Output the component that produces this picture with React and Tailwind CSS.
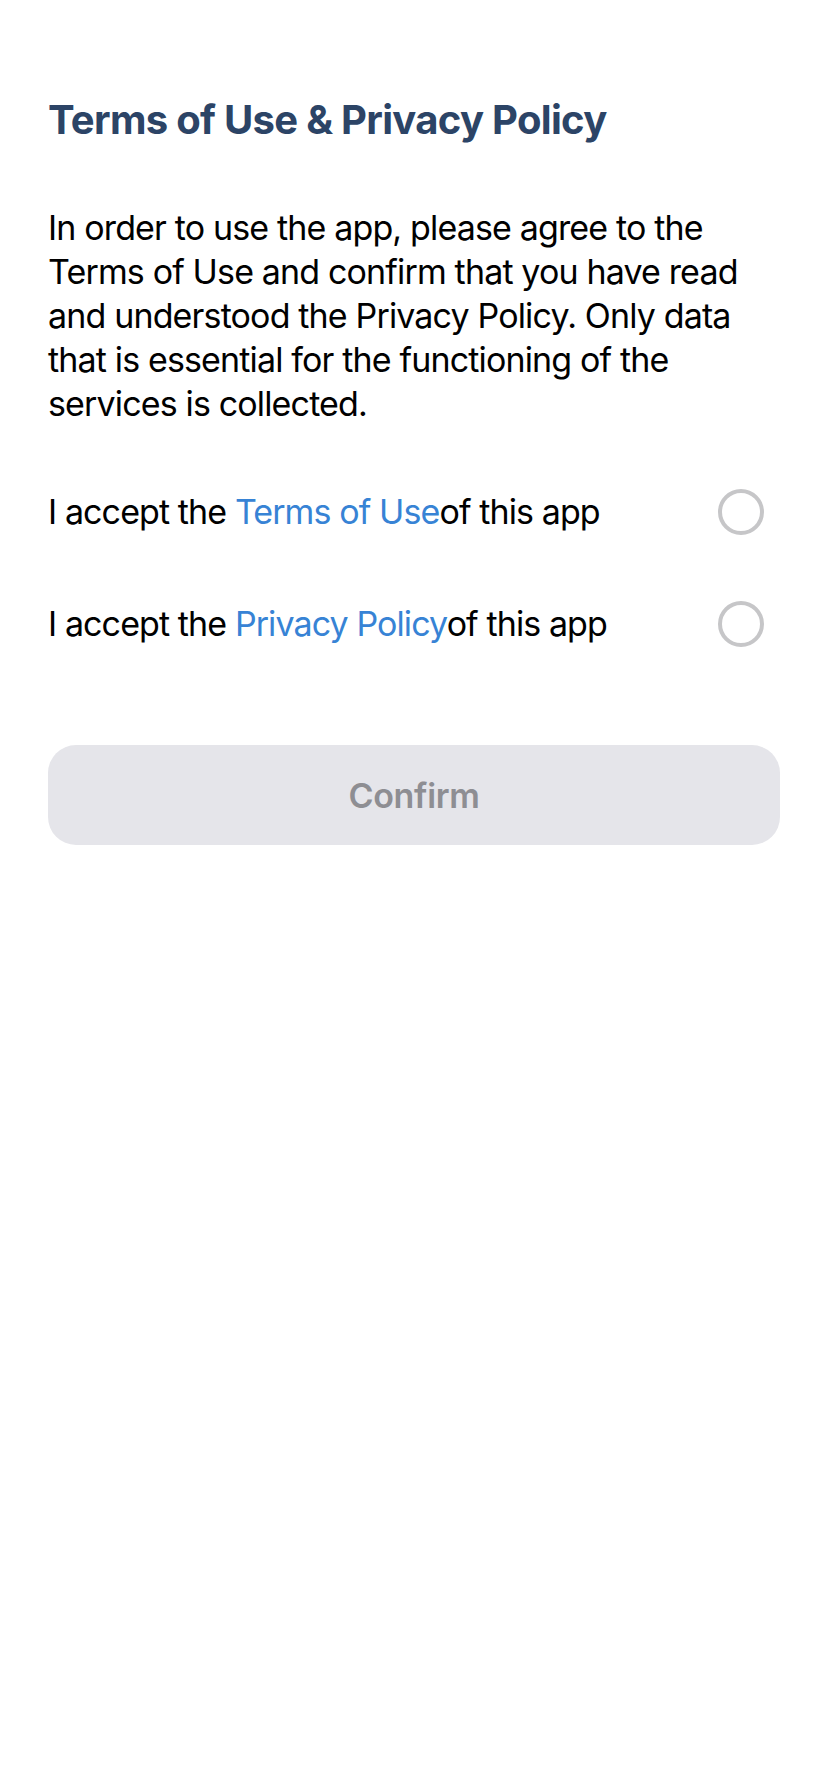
import React, { useState } from 'react'

const Radio = ({ checked, onClick }) => (
  <button
    onClick={onClick}
    className={`w-[46px] h-[46px] rounded-full border-[4px] shrink-0 ${
      checked ? 'border-[#3783d5] bg-[#3783d5]' : 'border-[#c6c6c8] bg-white'
    }`}
  />
)

const AcceptRow = ({ label, checked, onToggle }) => (
  <div className="flex items-center justify-between h-[112px] pr-[16px]">
    <p className="text-[34px] leading-[44px] text-black tracking-[-0.9px]">
      I accept the <span className="text-[#3783d5]">{label}</span>of this app
    </p>
    <Radio checked={checked} onClick={onToggle} />
  </div>
)

export default function App() {
  const [terms, setTerms] = useState(false)
  const [privacy, setPrivacy] = useState(false)
  const ready = terms && privacy

  return (
    <div className="min-h-[1792px] bg-white px-[48px] pt-[98px] font-['Inter','Liberation_Sans',sans-serif]">
      <h1 className="text-[40px] leading-[44px] font-bold text-[#2c4466] tracking-[-0.7px]">
        Terms of Use &amp; Privacy Policy
      </h1>

      <p className="mt-[64px] text-[34px] leading-[44px] text-black tracking-[-0.85px]">
        In order to use the app, please agree to the Terms of Use and confirm that you have read and
        understood the Privacy Policy. Only data that is essential for the functioning of the
        services is collected.
      </p>

      <div className="mt-[30px]">
        <AcceptRow label="Terms of Use" checked={terms} onToggle={() => setTerms(!terms)} />
        <AcceptRow label="Privacy Policy" checked={privacy} onToggle={() => setPrivacy(!privacy)} />
      </div>

      <button
        className={`mt-[65px] w-full h-[100px] rounded-[28px] text-[34px] font-semibold tracking-[-0.3px] ${
          ready ? 'bg-[#2c4466] text-white' : 'bg-[#e5e5ea] text-[#8e8e93]'
        }`}
      >
        Confirm
      </button>
    </div>
  )
}
